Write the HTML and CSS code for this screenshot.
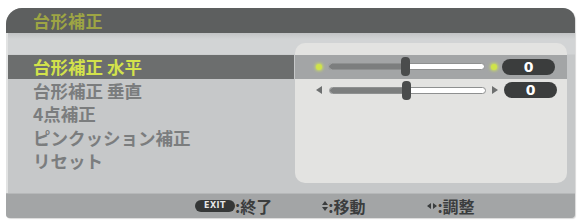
FILE: index.html
```html
<!DOCTYPE html>
<html lang="ja">
<head>
<meta charset="utf-8">
<title>台形補正</title>
<link rel="stylesheet" href="styles.css">
</head>
<body>
<div class="osd">
  <div class="hdr"><span class="title">台形補正</span></div>
  <div class="main">
    <div class="labels">
      <div class="row sel">台形補正 水平</div>
      <div class="row">台形補正 垂直</div>
      <div class="row">4点補正</div>
      <div class="row">ピンクッション補正</div>
      <div class="row">リセット</div>
    </div>
    <div class="panel">
      <div class="prow sel">
        <span class="dot"></span>
        <div class="track"><div class="fill" style="width:49%"></div><div class="knob" style="left:49%"></div></div>
        <span class="dot"></span>
        <div class="pill">0</div>
      </div>
      <div class="prow">
        <svg class="tri" width="6" height="8" viewBox="0 0 6 8"><path d="M0 4 L6 0 L6 8 Z" fill="#6e7070"/></svg>
        <div class="track"><div class="fill" style="width:49%"></div><div class="knob" style="left:49%"></div></div>
        <svg class="tri" width="6" height="8" viewBox="0 0 6 8"><path d="M6 4 L0 0 L0 8 Z" fill="#6e7070"/></svg>
        <div class="pill">0</div>
      </div>
    </div>
  </div>
  <div class="foot">
    <div class="fitem f1"><span class="exit">EXIT</span><span class="ftxt">:終了</span></div>
    <div class="fitem f2"><svg class="ud" width="6" height="10" viewBox="0 0 6 10"><path d="M3 0 L6 4 L0 4 Z M3 10 L6 6 L0 6 Z" fill="#3b3d3e"/></svg><span class="ftxt">:移動</span></div>
    <div class="fitem f3"><svg class="lr" width="10" height="6" viewBox="0 0 10 6"><path d="M0 3 L4 0 L4 6 Z M10 3 L6 0 L6 6 Z" fill="#3b3d3e"/></svg><span class="ftxt">:調整</span></div>
  </div>
</div>
</body>
</html>
```
FILE: styles.css
```css
* { box-sizing: border-box; }
html, body { margin: 0; padding: 0; background: #ffffff; }
body {
  font-family: "Noto Sans CJK JP", "Noto Sans", "Liberation Sans", sans-serif;
  width: 579px;
  height: 221px;
  overflow: hidden;
}
.osd {
  margin: 8px 0 0 6px;
  width: 569px;
  height: 210px;
  border-radius: 16px 12px 4px 4px;
  overflow: hidden;
  background: #c6c8c9;
  display: flex;
  flex-direction: column;
  box-shadow: 1px 1px 1px rgba(0,0,0,0.15);
}
.hdr {
  height: 25px;
  background: #5d5f5f;
  display: flex;
  align-items: center;
  padding-left: 27px;
}
.title {
  color: #9ea544;
  font-size: 17px;
  font-weight: 700;
  line-height: 1;
  letter-spacing: 0.5px;
}
.main {
  height: 160px;
  display: flex;
  background: linear-gradient(#c2c4c5 0, #d2d4d5 6px, #d2d4d5 21px, #c6c8c9 22px);
  border-left: 2px solid #e2e3e3;
}
.labels {
  width: 286px;
  padding-top: 22px;
}
.row {
  height: 23.5px;
  display: flex;
  align-items: center;
  padding-left: 25px;
  font-size: 17.5px;
  font-weight: 700;
  color: #7b7d7e;
  line-height: 1;
  white-space: pre;
}
.row.sel {
  background: #6c6e6e;
  color: #d3e24b;
}
.panel {
  margin: 10px 0 10px 1px;
  width: 272px;
  background: #e3e3e1;
  border-radius: 10px;
  padding-top: 12px;
}
.prow {
  height: 23.5px;
  display: flex;
  align-items: center;
  padding-left: 21px;
}
.prow.sel { background: #a3a5a6; }
.dot {
  width: 6px;
  height: 6px;
  border-radius: 50%;
  background: #cfe34a;
  box-shadow: 0 0 3px 1px #c9dc60;
}
.tri { display: block; margin: 0 1px 0 0; }
.track {
  position: relative;
  width: 157px;
  height: 7px;
  margin: 0 6px 0 6px;
  background: #ffffff;
  border: 1px solid #8e9090;
  border-radius: 4px;
}
.fill {
  height: 100%;
  background: #7c7e7e;
  border-radius: 3px 0 0 3px;
}
.knob {
  position: absolute;
  top: -7px;
  width: 9px;
  height: 19px;
  margin-left: -4px;
  background: #4a4c4c;
  border-radius: 4px;
}
.pill {
  margin-left: 5px;
  width: 53px;
  height: 16px;
  border-radius: 8px;
  background: #3b3d3d;
  color: #ffffff;
  font-family: "DejaVu Sans", "Liberation Sans", sans-serif;
  font-weight: 700;
  font-size: 14px;
  line-height: 16px;
  text-align: center;
}
.foot {
  height: 25px;
  background: #a3a5a6;
  border-top: 1px solid #b6b8b9;
  display: flex;
  align-items: center;
}
.fitem {
  display: flex;
  align-items: center;
}
.f1 { margin-left: 189px; }
.f2 { margin-left: 50px; }
.f3 { margin-left: 62px; }
.exit {
  display: inline-block;
  width: 40px;
  height: 12px;
  border-radius: 6px;
  background: #353737;
  color: #e6e6e6;
  font-family: "DejaVu Sans", "Liberation Sans", sans-serif;
  font-weight: 700;
  font-size: 8px;
  line-height: 12px;
  text-align: center;
  letter-spacing: 0.5px;
}
.ftxt {
  color: #3b3d3e;
  font-size: 16px;
  font-weight: 700;
  line-height: 1;
}
.ud, .lr { display: block; }
```
